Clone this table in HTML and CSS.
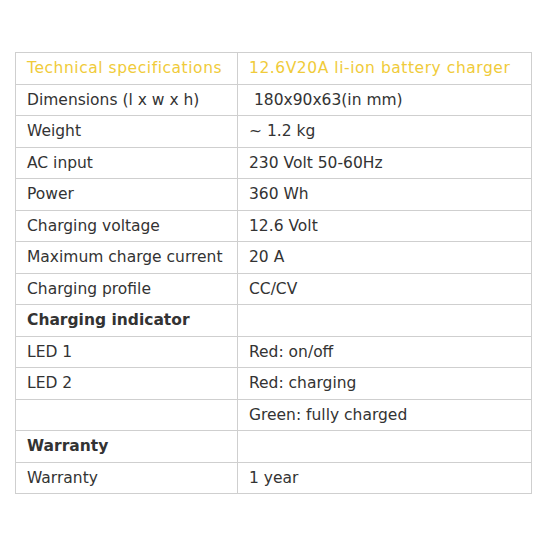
FILE: index.html
```html
<!DOCTYPE html>
<html>
<head>
<meta charset="utf-8">
<link rel="stylesheet" href="styles.css">
</head>
<body>
<table class="spec">
  <colgroup><col class="c1"><col class="c2"></colgroup>
  <tr class="head"><td>Technical specifications</td><td>12.6V20A li-ion battery charger</td></tr>
  <tr><td>Dimensions (l x w x h)</td><td>&nbsp;180x90x63(in mm)</td></tr>
  <tr><td>Weight</td><td>~ 1.2 kg</td></tr>
  <tr><td>AC input</td><td>230 Volt 50-60Hz</td></tr>
  <tr><td>Power</td><td>360 Wh</td></tr>
  <tr><td>Charging voltage</td><td>12.6 Volt</td></tr>
  <tr><td>Maximum charge current</td><td>20 A</td></tr>
  <tr><td>Charging profile</td><td>CC/CV</td></tr>
  <tr class="section"><td>Charging indicator</td><td></td></tr>
  <tr><td>LED 1</td><td>Red: on/off</td></tr>
  <tr><td>LED 2</td><td>Red: charging</td></tr>
  <tr><td></td><td>Green: fully charged</td></tr>
  <tr class="section"><td>Warranty</td><td></td></tr>
  <tr><td>Warranty</td><td>1 year</td></tr>
</table>
</body>
</html>
```
FILE: styles.css
```css
html, body {
  margin: 0;
  padding: 0;
  background: #fff;
}
body {
  padding: 52px 0 0 15px;
  font-family: "DejaVu Sans", Verdana, sans-serif;
  font-size: 15.5px;
  color: #333;
}
.spec {
  border-collapse: collapse;
  width: 516px;
  table-layout: fixed;
}
.c1 { width: 222px; }
.c2 { width: 294px; }
.spec td {
  border: 1px solid #cfcfcf;
  height: 31.5px;
  padding: 0 0 0 11px;
  box-sizing: border-box;
  vertical-align: middle;
  white-space: nowrap;
}
.spec tr.head td {
  color: #f0cb3a;
  letter-spacing: 0.55px;
}
.spec tr.section td {
  font-weight: bold;
}
```
